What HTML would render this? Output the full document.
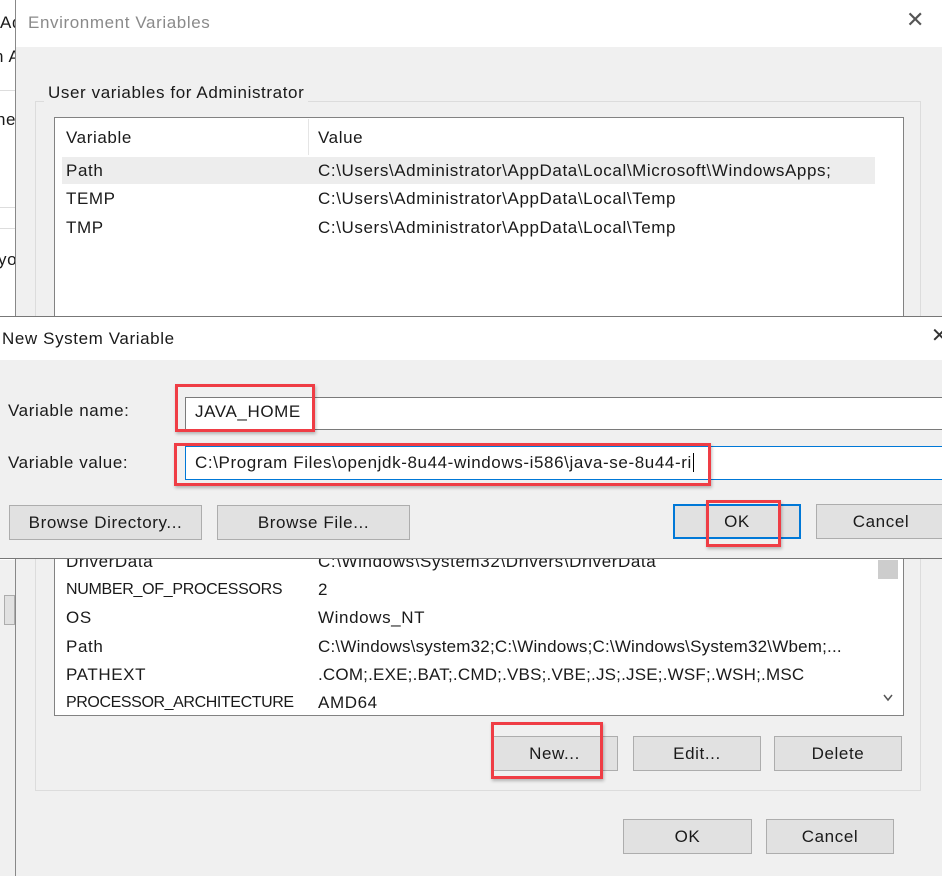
<!DOCTYPE html>
<html><head><style>
*{margin:0;padding:0;box-sizing:border-box}
body{width:942px;height:876px;background:#fff;position:relative;overflow:hidden;font-family:"Liberation Sans",sans-serif;font-size:17px;letter-spacing:0.6px;color:#1a1a1a}
.a{position:absolute}
.t{position:absolute;white-space:nowrap;line-height:20px}
.btn{position:absolute;background:#e1e1e1;border:1px solid #adadad;text-align:center;line-height:33px;font-size:17px}
.red{position:absolute;border:3px solid #ef3d45;box-shadow:1px 2px 3px rgba(0,0,0,.25)}
</style></head><body>
<div class="t" style="left:0;top:13px;">Ad</div>
<div class="t" style="left:-6px;top:47px;">n A</div>
<div class="t" style="left:-4px;top:110px;">he</div>
<div class="t" style="left:-2px;top:250px;">yo</div>
<div class="a" style="left:0;top:90px;width:15px;height:1px;background:#ddd"></div>
<div class="a" style="left:0;top:207px;width:15px;height:1px;background:#ddd"></div>
<div class="a" style="left:0;top:228px;width:15px;height:1px;background:#ddd"></div>
<div class="a" style="left:0;top:560px;width:15px;height:316px;background:#f0f0f0"></div>
<div class="a" style="left:4px;top:595px;width:11px;height:30px;background:#e1e1e1;border:1px solid #adadad"></div>
<div class="a" style="left:15px;top:0;width:927px;height:876px;background:#f0f0f0;border-left:1px solid #888"></div>
<div class="a" style="left:16px;top:0;width:926px;height:47px;background:#fff"></div>
<div class="t" style="left:28px;top:13px;color:#8a8a8a">Environment Variables</div>
<div class="t" style="left:906px;top:10px;color:#555;font-size:22px">✕</div>
<div class="a" style="left:35px;top:101px;width:886px;height:690px;border:1px solid #dcdcdc"></div>
<div class="t" style="left:44px;top:83px;background:#f0f0f0;padding:0 4px;color:#1a1a1a">User variables for Administrator</div>
<div class="a" style="left:54px;top:117px;width:850px;height:200px;background:#fff;border:1px solid #828282"></div>
<div class="a" style="left:308px;top:119px;width:1px;height:36px;background:#e5e5e5"></div>
<div class="t" style="left:66px;top:128px">Variable</div>
<div class="t" style="left:318px;top:128px">Value</div>
<div class="a" style="left:62px;top:157px;width:813px;height:27px;background:#ededed"></div>
<div class="t" style="left:66px;top:161px">Path</div>
<div class="t" style="left:318px;top:161px">C:\Users\Administrator\AppData\Local\Microsoft\WindowsApps;</div>
<div class="t" style="left:66px;top:189px">TEMP</div>
<div class="t" style="left:318px;top:189px">C:\Users\Administrator\AppData\Local\Temp</div>
<div class="t" style="left:66px;top:218px">TMP</div>
<div class="t" style="left:318px;top:218px">C:\Users\Administrator\AppData\Local\Temp</div>
<div class="a" style="left:54px;top:540px;width:850px;height:176px;background:#fff;border:1px solid #828282"></div>
<div class="a" style="left:876px;top:541px;width:24px;height:174px;background:#fff"></div>
<div class="a" style="left:878px;top:560px;width:20px;height:19px;background:#cdcdcd"></div>
<svg class="a" style="left:882px;top:693px" width="12" height="10"><path d="M2 2 L6 7 L10 2" fill="none" stroke="#555" stroke-width="1.5"/></svg>
<div class="t" style="left:66px;top:552px">DriverData</div>
<div class="t" style="left:318px;top:552px">C:\Windows\System32\Drivers\DriverData</div>
<div class="t" style="left:66px;top:580px;font-size:16px;letter-spacing:-0.3px">NUMBER_OF_PROCESSORS</div>
<div class="t" style="left:318px;top:580px">2</div>
<div class="t" style="left:66px;top:608px">OS</div>
<div class="t" style="left:318px;top:608px">Windows_NT</div>
<div class="t" style="left:66px;top:637px">Path</div>
<div class="t" style="left:318px;top:637px;letter-spacing:0.2px">C:\Windows\system32;C:\Windows;C:\Windows\System32\Wbem;...</div>
<div class="t" style="left:66px;top:665px">PATHEXT</div>
<div class="t" style="left:318px;top:665px;letter-spacing:0.2px">.COM;.EXE;.BAT;.CMD;.VBS;.VBE;.JS;.JSE;.WSF;.WSH;.MSC</div>
<div class="t" style="left:66px;top:693px;font-size:16px;letter-spacing:-0.4px">PROCESSOR_ARCHITECTURE</div>
<div class="t" style="left:318px;top:693px">AMD64</div>
<div class="btn" style="left:491px;top:736px;width:127px;height:35px">New...</div>
<div class="btn" style="left:633px;top:736px;width:128px;height:35px">Edit...</div>
<div class="btn" style="left:774px;top:736px;width:128px;height:35px">Delete</div>
<div class="red" style="left:491px;top:722px;width:112px;height:57px"></div>
<div class="btn" style="left:623px;top:819px;width:129px;height:35px">OK</div>
<div class="btn" style="left:766px;top:819px;width:128px;height:35px">Cancel</div>
<div class="a" style="left:0;top:316px;width:942px;height:243px;background:#f0f0f0;border-top:1px solid #777;border-bottom:1px solid #777"></div>
<div class="a" style="left:0;top:317px;width:942px;height:43px;background:#fff"></div>
<div class="t" style="left:2px;top:329px">New System Variable</div>
<div class="t" style="left:931px;top:326px;color:#333;font-size:20px">✕</div>
<div class="t" style="left:8px;top:401px">Variable name:</div>
<div class="t" style="left:8px;top:453px">Variable value:</div>
<div class="a" style="left:185px;top:397px;width:760px;height:33px;background:#fff;border:1px solid #7a7a7a"></div>
<div class="t" style="left:195px;top:402px">JAVA_HOME</div>
<div class="a" style="left:185px;top:446px;width:760px;height:34px;background:#fff;border:1px solid #0078d7"></div>
<div class="t" style="left:195px;top:453px">C:\Program Files\openjdk-8u44-windows-i586\java-se-8u44-ri<span style="border-left:1px solid #000;margin-left:1px"></span></div>
<div class="red" style="left:175px;top:384px;width:140px;height:48px"></div>
<div class="red" style="left:174px;top:443px;width:537px;height:43px"></div>
<div class="btn" style="left:9px;top:505px;width:193px;height:35px">Browse Directory...</div>
<div class="btn" style="left:217px;top:505px;width:193px;height:35px">Browse File...</div>
<div class="btn" style="left:673px;top:504px;width:128px;height:35px;border:2px solid #0078d7;line-height:31px">OK</div>
<div class="btn" style="left:816px;top:504px;width:130px;height:35px">Cancel</div>
<div class="red" style="left:706px;top:500px;width:75px;height:47px"></div>
</body></html>
